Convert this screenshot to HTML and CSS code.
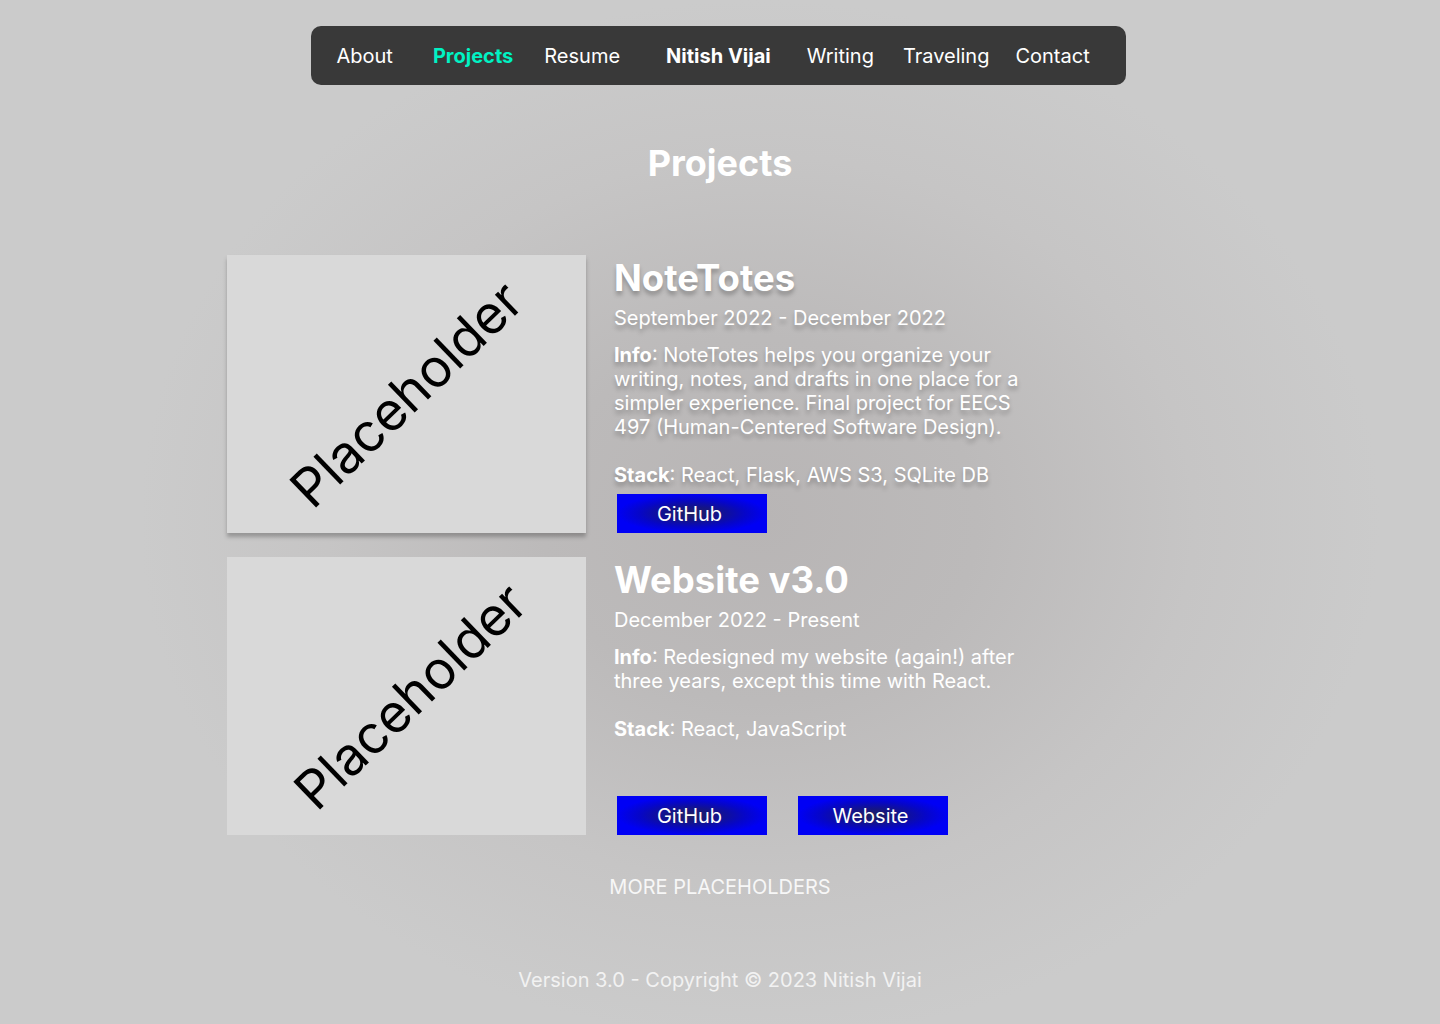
FILE: index.html
```html
<!DOCTYPE html>
<html lang="en">
<head>
<meta charset="utf-8">
<title>Projects - Nitish Vijai</title>
<link rel="stylesheet" href="styles.css">
</head>
<body>
<div class="page">
  <nav class="nav">
    <a class="nav-item about">About</a>
    <a class="nav-item projects active">Projects</a>
    <a class="nav-item resume">Resume</a>
    <a class="nav-item brand">Nitish Vijai</a>
    <a class="nav-item writing">Writing</a>
    <a class="nav-item traveling">Traveling</a>
    <a class="nav-item contact">Contact</a>
  </nav>

  <h1 class="page-title">Projects</h1>

  <section class="projects-list">
    <article class="card shadowed">
      <div class="thumb"><span class="thumb-label">Placeholder</span></div>
      <div class="details">
        <h2 class="card-title">NoteTotes</h2>
        <p class="date">September 2022 - December 2022</p>
        <p class="info"><b>Info</b>: NoteTotes helps you organize your writing, notes, and drafts in one place for a simpler experience. Final project for EECS 497 (Human-Centered Software Design).</p>
        <p class="stack"><b>Stack</b>: React, Flask, AWS S3, SQLite DB</p>
        <div class="buttons">
          <a class="btn">GitHub</a>
        </div>
      </div>
    </article>

    <article class="card">
      <div class="thumb"><span class="thumb-label">Placeholder</span></div>
      <div class="details">
        <h2 class="card-title">Website v3.0</h2>
        <p class="date">December 2022 - Present</p>
        <p class="info"><b>Info</b>: Redesigned my website (again!) after three years, except this time with React.</p>
        <p class="stack"><b>Stack</b>: React, JavaScript</p>
        <div class="buttons">
          <a class="btn">GitHub</a>
          <a class="btn">Website</a>
        </div>
      </div>
    </article>
  </section>

  <p class="more">MORE PLACEHOLDERS</p>

  <footer class="footer">Version 3.0 - Copyright © 2023 Nitish Vijai</footer>
</div>
</body>
</html>
```

FILE: styles.css
```css
* { box-sizing: border-box; }

html, body {
  margin: 0;
  padding: 0;
}

body {
  min-height: 1024px;
  font-family: Inter, "Noto Sans", sans-serif;
  color: #ffffff;
  background-color: #cbcbcb;
  background-image: radial-gradient(ellipse 620px 520px at 760px 520px, #b8b5b5 0%, #bcbaba 35%, #c6c5c5 70%, #cbcbcb 100%);
  background-repeat: no-repeat;
}

.page {
  display: flex;
  flex-direction: column;
  align-items: center;
  padding-top: 26px;
}

/* NAV */
.nav {
  width: 815px;
  height: 59px;
  margin-right: 4px;
  background: #393939;
  border-radius: 10px;
  display: flex;
  align-items: center;
  padding-left: 26px;
  font-size: 20px;
  line-height: 24px;
}

.nav-item {
  color: #ffffff;
  text-decoration: none;
  white-space: nowrap;
}

.nav-item.projects { margin-left: 40px; }
.nav-item.resume { margin-left: 31px; }
.nav-item.brand { margin-left: 46px; font-weight: 700; }
.nav-item.writing { margin-left: 36px; }
.nav-item.traveling { margin-left: 29px; }
.nav-item.contact { margin-left: 26px; }

.nav-item.active {
  color: #00f2c3;
  font-weight: 700;
}

/* TITLE */
.page-title {
  margin: 56px 0 0;
  font-size: 36px;
  line-height: 44px;
  font-weight: 700;
  color: #ffffff;
}

/* PROJECTS */
.projects-list {
  width: 986px;
  margin-top: 70px;
  display: flex;
  flex-direction: column;
  gap: 24px;
}

.card {
  display: flex;
  gap: 28px;
  height: 278px;
}

.thumb {
  flex: 0 0 359px;
  height: 278px;
  background: #d9d9d9;
  display: flex;
  align-items: center;
  justify-content: center;
  overflow: hidden;
}

.card.shadowed .thumb {
  box-shadow: 0 4px 4px rgba(0, 0, 0, 0.25);
}

.thumb-label {
  display: block;
  transform: rotate(-44deg);
  font-family: Inter, "Noto Sans", sans-serif;
  font-size: 53px;
  font-weight: 400;
  color: #000000;
  white-space: nowrap;
}

.card:not(.shadowed) .thumb-label {
  margin-left: 8px;
}

.details {
  display: flex;
  flex-direction: column;
  width: 412px;
}

.card.shadowed .details {
  text-shadow: 0 4px 4px rgba(0, 0, 0, 0.25);
}

.card-title {
  margin: 0;
  font-size: 36.5px;
  line-height: 46px;
  font-weight: 700;
}

.date {
  margin: 5px 0 0;
  font-size: 20px;
  line-height: 24px;
}

.info {
  margin: 13px 0 0;
  font-size: 20px;
  line-height: 24px;
}

.stack {
  margin: 24px 0 0;
  font-size: 20px;
  line-height: 24px;
}

.info b, .stack b { font-weight: 700; }

.buttons {
  margin-top: auto;
  margin-left: 3px;
  display: flex;
  gap: 31px;
}

.btn {
  width: 150px;
  height: 39px;
  padding-right: 5px;
  display: flex;
  align-items: center;
  justify-content: center;
  font-size: 20px;
  color: #ffffff;
  text-shadow: none;
  background: radial-gradient(ellipse 50% 50% at 50% 50%, #202060 0%, #141488 35%, #0606c8 70%, #0000f5 100%);
  background-color: #0000f5;
}

.more {
  margin: 40px 0 0;
  font-size: 20px;
  line-height: 24px;
  color: #f7f7f7;
}

.footer {
  margin-top: 69px;
  font-size: 20px;
  line-height: 24px;
  color: #f2f2f2;
}
```
